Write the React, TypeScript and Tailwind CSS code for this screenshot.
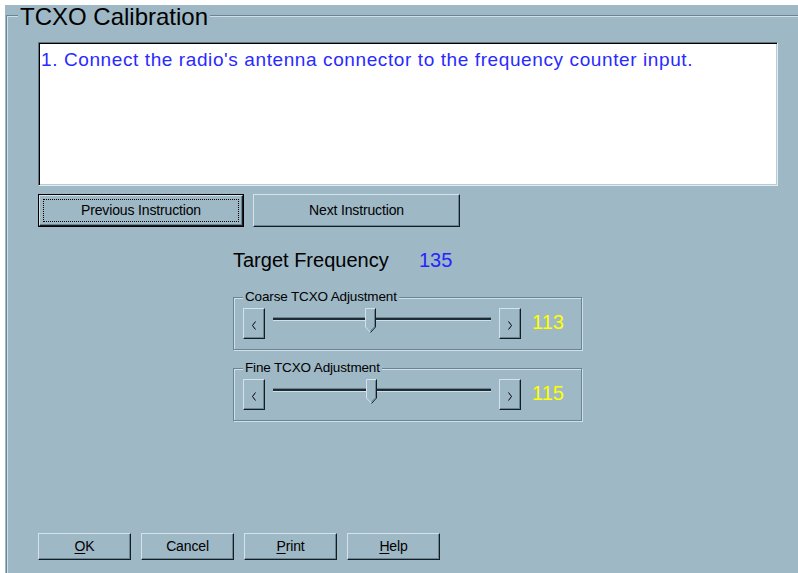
import React from 'react';

// Win9x style 3D edges on the blue-grey face colour
const raised =
  'border border-t-[#d4e3ea] border-l-[#d4e3ea] border-r-[#141d22] border-b-[#141d22] shadow-[inset_-1px_-1px_0_#6a8593] bg-[#9eb8c6]';
const etched = 'border border-[#6a8593] shadow-[inset_1px_1px_0_#d0e0e8,1px_1px_0_#d0e0e8]';

function Chevron({ dir }: { dir: 'left' | 'right' }) {
  return (
    <svg width="6" height="9" viewBox="0 0 6 9" className="block">
      <polyline
        points={dir === 'left' ? '4.5,0.5 1.5,4.5 4.5,8.5' : '1.5,0.5 4.5,4.5 1.5,8.5'}
        fill="none"
        stroke="#000"
        strokeWidth="1"
      />
    </svg>
  );
}

function Thumb() {
  return (
    <svg width="11" height="25" viewBox="0 0 11 25" className="block">
      <path d="M0.5 0.5 H10.5 V19 L5.5 24.5 L0.5 19 Z" fill="#9eb8c6" />
      <path d="M0.5 19 V0.5 H10" stroke="#d4e3ea" fill="none" />
      <path d="M0.5 19 L5 24" stroke="#d4e3ea" fill="none" />
      <path d="M10.5 0.5 V19 L5.5 24.5" stroke="#141d22" fill="none" />
      <path d="M9.5 1.5 V18.6 L5.5 23" stroke="#6a8593" fill="none" />
    </svg>
  );
}

interface SliderBoxProps {
  label: string;
  value: number;
  thumbLeft: number;
}

const SliderBox: React.FC<SliderBoxProps> = ({ label, value, thumbLeft }) => (
  <div className={`relative h-[53px] w-[349px] ${etched}`}>
    <span className="absolute -top-[9px] left-[9px] bg-[#9eb8c6] px-[2px] text-[13.5px] leading-[16px] tracking-[-0.15px] text-black">
      {label}
    </span>
    <div className="flex items-start pl-[9px] pt-[10px]">
      <button className={`${raised} flex h-[31px] w-[22px] items-center justify-center pt-[3px]`}>
        <Chevron dir="left" />
      </button>
      <div className="relative ml-[8px] mt-[9px] h-[4px] w-[218px] border-t border-b border-t-[#6a8593] border-b-[#d0e0e8] bg-[#1f2b32]">
        <div className="absolute -top-[10px]" style={{ left: thumbLeft }}>
          <Thumb />
        </div>
      </div>
      <button className={`${raised} ml-[8px] flex h-[31px] w-[22px] items-center justify-center pt-[3px]`}>
        <Chevron dir="right" />
      </button>
      <span className="ml-[11px] mt-[3px] text-[20px] leading-[23px] text-[#ffff00]">{value}</span>
    </div>
  </div>
);

const DialogButton: React.FC<{ children: React.ReactNode }> = ({ children }) => (
  <button className={`${raised} h-[27px] w-[93px] text-[14px] tracking-[-0.15px] text-black`}>{children}</button>
);

export default function App() {
  return (
    <div className="h-[573px] w-[798px] overflow-hidden bg-white pl-[5px] pt-[5px] font-['Liberation_Sans',Arial,sans-serif]">
      <div className="h-full bg-[#9eb8c6] pl-[1px] pt-[10px]">
        <div className="relative h-[600px] border-t border-l border-[#6a8593] pl-[31px] pt-[26px] shadow-[inset_1px_1px_0_#d0e0e8]">
          <span className="absolute -top-[11px] left-[11px] bg-[#9eb8c6] px-[2px] text-[24px] leading-[24px] text-black">
            TCXO Calibration
          </span>

          <div className="h-[144px] w-[740px] border border-t-[#5f7886] border-l-[#5f7886] border-r-[#e2edf2] border-b-[#e2edf2] bg-white pl-[2px] pt-[6px] shadow-[inset_1px_1px_0_#000,inset_-1px_-1px_0_#b8ccd6]">
            <p className="text-[19px] leading-[22px] tracking-[0.6px] text-[#2a2aff]">
              1. Connect the radio's antenna connector to the frequency counter input.
            </p>
          </div>

          <div className="mt-[8px] flex gap-[9px]">
            <div className="h-[33px] w-[206px] border border-black">
              <button className={`${raised} relative h-full w-full text-[14px] tracking-[-0.15px] text-black`}>
                <span className="pointer-events-none absolute inset-[3px] border border-dotted border-black" />
                Previous Instruction
              </button>
            </div>
            <button className={`${raised} h-[33px] w-[207px] text-[14px] tracking-[-0.15px] text-black`}>
              Next Instruction
            </button>
          </div>

          <div className="ml-[195px] flex flex-col">
            <div className="mt-[22px] flex text-[20px] leading-[23px]">
              <span className="w-[186px] text-black">Target Frequency</span>
              <span className="text-[#2424ff]">135</span>
            </div>
            <div className="mt-[25px]">
              <SliderBox label="Coarse TCXO Adjustment" value={113} thumbLeft={92} />
            </div>
            <div className="mt-[18px]">
              <SliderBox label="Fine TCXO Adjustment" value={115} thumbLeft={93} />
            </div>
          </div>

          <div className="mt-[112px] flex gap-[10px]">
            <DialogButton>
              <span className="underline underline-offset-2">O</span>K
            </DialogButton>
            <DialogButton>Cancel</DialogButton>
            <DialogButton>
              <span className="underline underline-offset-2">P</span>rint
            </DialogButton>
            <DialogButton>
              <span className="underline underline-offset-2">H</span>elp
            </DialogButton>
          </div>
        </div>
      </div>
    </div>
  );
}
